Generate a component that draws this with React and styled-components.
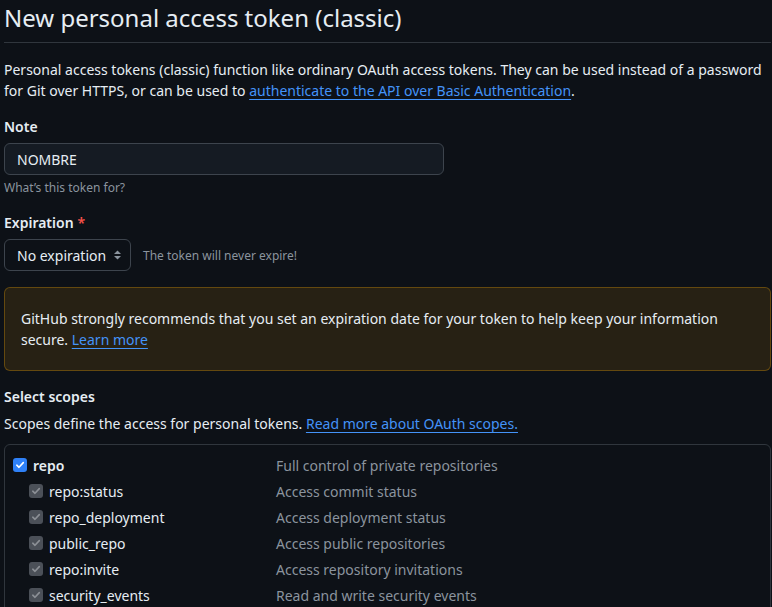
import React from "react";
import styled, { createGlobalStyle } from "styled-components";

const Global = createGlobalStyle`
  html, body { margin: 0; padding: 0; background: #0d1117; }
  body {
    font-family: "Noto Sans", "Open Sans", sans-serif;
    color: #e6edf3;
    font-size: 14px;
    line-height: 21px;
    overflow: hidden;
  }
`;

const Page = styled.div`
  width: 767px;
  margin-left: 4px;
`;

const Subhead = styled.div`
  border-bottom: 1px solid #30363d;
  padding-bottom: 6px;
  margin-bottom: 16px;
`;

const Title = styled.h1`
  margin: 0;
  font-size: 24px;
  line-height: 36px;
  font-weight: 400;
  color: #e6edf3;
`;

const Intro = styled.p`
  margin: 0 0 15px;
`;

const Link = styled.a`
  color: #4493f8;
  text-decoration: underline;
  text-underline-offset: 3px;
  cursor: pointer;
`;

const Group = styled.div`
  margin-bottom: ${(p) => p.$mb ?? 16}px;
`;

const Label = styled.div`
  font-weight: 600;
  margin-bottom: 6px;
`;

const Required = styled.span`
  color: #f85149;
  margin-left: 4px;
`;

const TextInput = styled.div`
  box-sizing: border-box;
  width: 440px;
  height: 32px;
  padding: 0 12px;
  display: flex;
  align-items: center;
  background: #151b23;
  border: 1px solid #3d444d;
  border-radius: 6px;
  color: #e6edf3;
`;

const Hint = styled.div`
  margin-top: 4px;
  font-size: 12px;
  line-height: 18px;
  color: #8b949e;
`;

const SelectRow = styled.div`
  display: flex;
  align-items: center;
  gap: 12px;
`;

const Select = styled.div`
  box-sizing: border-box;
  width: 127px;
  height: 32px;
  padding: 0 8px 0 12px;
  display: flex;
  align-items: center;
  justify-content: space-between;
  border: 1px solid #3d444d;
  border-radius: 6px;
  background: #0d1117;
  color: #e6edf3;
`;

const SideNote = styled.span`
  font-size: 12px;
  color: #8b949e;
`;

const Flash = styled.div`
  padding: 20px 16px;
  border: 1px solid rgba(187, 128, 9, 0.42);
  border-radius: 6px;
  background: rgba(187, 128, 9, 0.15);
  margin-bottom: 15px;
`;

const ScopesIntro = styled.p`
  margin: 0 0 10px;
`;

const ScopeBox = styled.div`
  border: 1px solid #30363d;
  border-radius: 6px;
  padding: 7px 0 20px;
`;

const ScopeRow = styled.div`
  display: grid;
  grid-template-columns: 271px 1fr;
  height: 26px;
  align-items: center;
`;

const ScopeName = styled.label`
  display: flex;
  align-items: center;
  gap: 6px;
  padding-left: ${(p) => (p.$sub ? 24 : 8)}px;
  font-weight: ${(p) => (p.$sub ? 400 : 600)};
  color: #e6edf3;
`;

const ScopeDesc = styled.span`
  color: #8b949e;
`;

const Box = styled.span`
  width: 14px;
  height: 14px;
  border-radius: 3px;
  flex: none;
  display: inline-flex;
  align-items: center;
  justify-content: center;
  background: ${(p) => (p.$disabled ? "#4b5058" : "#2f81f7")};
`;

function Check({ disabled }) {
  return (
    <Box $disabled={disabled}>
      <svg width="10" height="10" viewBox="0 0 10 10">
        <path
          d="M1.8 5.2 L4 7.3 L8.3 2.6"
          fill="none"
          stroke={disabled ? "#8c9096" : "#ffffff"}
          strokeWidth="1.6"
          strokeLinecap="round"
          strokeLinejoin="round"
        />
      </svg>
    </Box>
  );
}

function Chevrons() {
  return (
    <svg width="9" height="12" viewBox="0 0 9 12">
      <path d="M4.5 1.5 L8 5 H1 Z" fill="#8b949e" />
      <path d="M4.5 10.5 L8 7 H1 Z" fill="#8b949e" />
    </svg>
  );
}

const scopes = [
  { name: "repo", desc: "Full control of private repositories", sub: false },
  { name: "repo:status", desc: "Access commit status", sub: true },
  { name: "repo_deployment", desc: "Access deployment status", sub: true },
  { name: "public_repo", desc: "Access public repositories", sub: true },
  { name: "repo:invite", desc: "Access repository invitations", sub: true },
  { name: "security_events", desc: "Read and write security events", sub: true },
];

export default function App() {
  return (
    <>
      <Global />
      <Page>
        <Subhead>
          <Title>New personal access token (classic)</Title>
        </Subhead>
        <Intro>
          Personal access tokens (classic) function like ordinary OAuth access tokens. They can be used instead of a password
          for Git over HTTPS, or can be used to <Link>authenticate to the API over Basic Authentication</Link>.
        </Intro>

        <Group $mb={15}>
          <Label>Note</Label>
          <TextInput>NOMBRE</TextInput>
          <Hint>What’s this token for?</Hint>
        </Group>

        <Group $mb={16}>
          <Label>
            Expiration<Required>*</Required>
          </Label>
          <SelectRow>
            <Select>
              <span>No expiration</span>
              <Chevrons />
            </Select>
            <SideNote>The token will never expire!</SideNote>
          </SelectRow>
        </Group>

        <Flash>
          GitHub strongly recommends that you set an expiration date for your token to help keep your information
          secure. <Link>Learn more</Link>
        </Flash>

        <Label>Select scopes</Label>
        <ScopesIntro>
          Scopes define the access for personal tokens. <Link>Read more about OAuth scopes.</Link>
        </ScopesIntro>

        <ScopeBox>
          {scopes.map((s) => (
            <ScopeRow key={s.name}>
              <ScopeName $sub={s.sub}>
                <Check disabled={s.sub} />
                {s.name}
              </ScopeName>
              <ScopeDesc>{s.desc}</ScopeDesc>
            </ScopeRow>
          ))}
        </ScopeBox>
      </Page>
    </>
  );
}
